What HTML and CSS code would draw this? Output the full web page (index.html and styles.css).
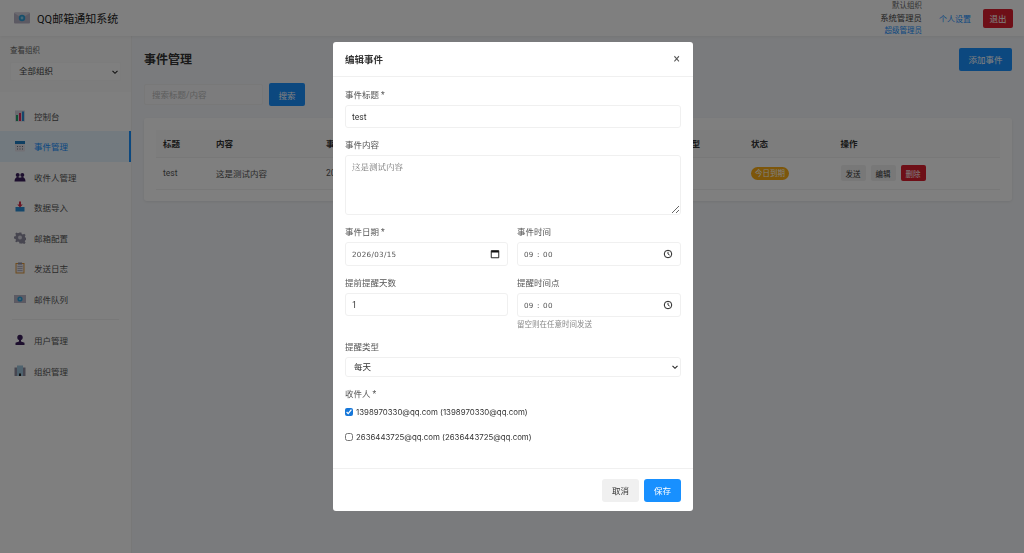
FILE: index.html
```html
<!DOCTYPE html>
<html lang="zh-CN">
<head>
<meta charset="utf-8">
<title>事件管理</title>
<link rel="stylesheet" href="styles.css">
</head>
<body>
<div class="app">
  <header class="topbar">
    <div class="brand">
      <svg class="brand-icon" viewBox="0 0 16 12"><rect x="0" y="0.5" width="16" height="11" rx="1" fill="#b9b4c6"/><path d="M0 1l8 5 8-5" fill="#d5d2de"/><circle cx="8" cy="6" r="3.2" fill="#2f9fd8"/><circle cx="8" cy="6" r="1.4" fill="#8fd0ee"/></svg>
      <span>QQ邮箱通知系统</span>
    </div>
    <div class="top-right">
      <div class="user-block">
        <div class="org-name">默认组织</div>
        <div class="user-name">系统管理员</div>
        <div class="user-role">超级管理员</div>
      </div>
      <a class="top-link">个人设置</a>
      <button class="btn btn-danger btn-logout">退出</button>
    </div>
  </header>
  <div class="layout">
    <aside class="sidebar">
      <div class="org-switch">
        <label class="org-label">查看组织</label>
        <select class="org-select"><option>全部组织</option></select>
      </div>
      <nav class="nav">
        <a class="nav-item"><svg class="ico" viewBox="0 0 12 12"><rect x="1" y="0.5" width="10" height="11" fill="#d8d4e0"/><rect x="2" y="5" width="2" height="6" fill="#22a06b"/><rect x="5" y="3" width="2" height="8" fill="#e0245e"/><rect x="8" y="1.5" width="2" height="9.500" fill="#2b8fd6"/></svg>控制台</a>
        <a class="nav-item active"><svg class="ico" viewBox="0 0 12 12"><rect x="1" y="1" width="10" height="10.500" rx="1" fill="#e4e2ea"/><rect x="1" y="1" width="10" height="3" fill="#1f7fc4"/><path d="M3 6h1v1H3zM5.500 6h1v1h-1zM8 6h1v1H8zM3 8.500h1v1H3zM5.500 8.500h1v1h-1zM8 8.500h1v1H8z" fill="#6b7280"/></svg>事件管理</a>
        <a class="nav-item"><svg class="ico" viewBox="0 0 12 12"><circle cx="3.700" cy="4" r="2" fill="#3b1f5c"/><circle cx="8.300" cy="4" r="2" fill="#3b1f5c"/><path d="M0.500 10.500c0-3 1.500-4.500 3.200-4.500s2.300 1 2.300 1 .6-1 2.300-1 3.200 1.500 3.200 4.500z" fill="#3b1f5c"/></svg>收件人管理</a>
        <a class="nav-item"><svg class="ico" viewBox="0 0 12 12"><path d="M1.500 6h9v4.500h-9z" fill="#2b8fd6"/><path d="M5 0.500h2v3h1.800L6 6.500 3.200 3.500H5z" fill="#d92d4a"/></svg>数据导入</a>
        <a class="nav-item"><svg class="ico" viewBox="0 0 12 12"><path d="M5 .5h2l.3 1.500 1.200.5 1.300-.8 1.400 1.400-.8 1.300.5 1.200 1.500.3v2l-1.500.3-.5 1.200.8 1.300-1.400 1.400-1.300-.8-1.200.5L7 11.500H5l-.3-1.500-1.200-.5-1.300.8L.8 9.400l.8-1.300-.5-1.200L-.4 6.600v-2L1.100 4.300l.5-1.200-.8-1.300L2.200.4l1.300.8 1.200-.5z" fill="#8f8da0" transform="translate(0.400 0)"/><circle cx="6" cy="5.600" r="2" fill="#d8d6e0"/></svg>邮箱配置</a>
        <a class="nav-item"><svg class="ico" viewBox="0 0 12 12"><rect x="1.500" y="1" width="9" height="10.500" fill="#e09a3e"/><rect x="2.500" y="2" width="7" height="8.500" fill="#e8e6ee"/><rect x="4" y="0.500" width="4" height="2" fill="#8f8da0"/><path d="M3.500 4.500h5M3.500 6.500h5M3.500 8.500h5" stroke="#9a98a8" stroke-width=".7"/></svg>发送日志</a>
        <a class="nav-item"><svg class="ico" viewBox="0 0 12 12"><rect x="0" y="2" width="12" height="8" fill="#b9b4c6"/><circle cx="6" cy="6" r="2.600" fill="#2f9fd8"/><circle cx="6" cy="6" r="1.100" fill="#8fd0ee"/></svg>邮件队列</a>
        <div class="nav-divider"></div>
        <a class="nav-item"><svg class="ico" viewBox="0 0 12 12"><circle cx="6" cy="3.500" r="2.700" fill="#3b1f5c"/><path d="M5 6h2v1.500l3.500 1.200V11h-9V8.700L5 7.500z" fill="#3b1f5c"/></svg>用户管理</a>
        <a class="nav-item"><svg class="ico" viewBox="0 0 12 12"><rect x="0.500" y="2.500" width="2.500" height="8.500" fill="#8f8da0"/><rect x="9" y="2.500" width="2.500" height="8.500" fill="#8f8da0"/><rect x="3" y="0.500" width="6" height="10.500" fill="#9cc4dc"/><rect x="5" y="8.500" width="2" height="2.500" fill="#222"/></svg>组织管理</a>
      </nav>
    </aside>
    <main class="main">
      <div class="page-head">
        <h1 class="page-title">事件管理</h1>
        <button class="btn btn-primary btn-add">添加事件</button>
      </div>
      <div class="search-row">
        <input class="search-input" placeholder="搜索标题/内容">
        <button class="btn btn-primary btn-search">搜索</button>
      </div>
      <section class="card">
        <table class="table">
          <colgroup><col class="c1"><col class="c2"><col class="c3"><col class="c4"><col class="c5"><col class="c6"><col class="c7"></colgroup>
          <thead><tr><th>标题</th><th>内容</th><th>事件日期</th><th>提前提醒</th><th>提醒类型</th><th>状态</th><th>操作</th></tr></thead>
          <tbody><tr>
            <td>test</td><td>这是测试内容</td><td>2026-03-15 09:00</td><td>1天</td><td>每天</td>
            <td><span class="badge">今日到期</span></td>
            <td><div class="actions"><button class="btn btn-sm">发送</button><button class="btn btn-sm">编辑</button><button class="btn btn-sm btn-danger">删除</button></div></td>
          </tr></tbody>
        </table>
      </section>
    </main>
  </div>
</div>

<div class="overlay">
  <div class="modal">
    <div class="modal-head">
      <h2 class="modal-title">编辑事件</h2>
      <span class="modal-close">×</span>
    </div>
    <div class="modal-body">
      <div class="field">
        <label class="label">事件标题 *</label>
        <input class="control" value="test">
      </div>
      <div class="field">
        <label class="label">事件内容</label>
        <textarea class="control area" placeholder="这是测试内容"></textarea>
      </div>
      <div class="grid2">
        <div class="field">
          <label class="label">事件日期 *</label>
          <div class="control picker"><span class="picker-val">2026/03/15</span>
            <svg class="picker-ico" viewBox="0 0 12 12"><path d="M1.500 2h9v8.500h-9z" fill="none" stroke="#111" stroke-width="1.100"/><path d="M1.500 2h9v2.300h-9z" fill="#111"/></svg>
          </div>
        </div>
        <div class="field">
          <label class="label">事件时间</label>
          <div class="control picker"><span class="picker-val">09<span class="colon">:</span>00</span>
            <svg class="picker-ico" viewBox="0 0 12 12"><circle cx="6" cy="6" r="4.500" fill="none" stroke="#111" stroke-width="1.100"/><path d="M6 3.300V6l2 1.300" fill="none" stroke="#111"/></svg>
          </div>
        </div>
      </div>
      <div class="grid2">
        <div class="field">
          <label class="label">提前提醒天数</label>
          <input class="control" value="1">
        </div>
        <div class="field">
          <label class="label">提醒时间点</label>
          <div class="control picker"><span class="picker-val">09<span class="colon">:</span>00</span>
            <svg class="picker-ico" viewBox="0 0 12 12"><circle cx="6" cy="6" r="4.500" fill="none" stroke="#111" stroke-width="1.100"/><path d="M6 3.300V6l2 1.300" fill="none" stroke="#111"/></svg>
          </div>
          <div class="hint">留空则在任意时间发送</div>
        </div>
      </div>
      <div class="field">
        <label class="label">提醒类型</label>
        <select class="control select"><option>每天</option></select>
      </div>
      <div class="field recipients">
        <label class="label">收件人 *</label>
        <label class="check"><input type="checkbox" checked><span>1398970330@qq.com (1398970330@qq.com)</span></label>
        <label class="check"><input type="checkbox"><span>2636443725@qq.com (2636443725@qq.com)</span></label>
      </div>
    </div>
    <div class="modal-foot">
      <button class="btn btn-cancel">取消</button>
      <button class="btn btn-save">保存</button>
    </div>
  </div>
</div>
</body>
</html>
```
FILE: styles.css
```css
* { box-sizing: border-box; }
html, body { margin: 0; height: 100%; overflow: hidden; }
body {
  font-family: "Roboto", "Noto Sans CJK SC", sans-serif;
  font-size: 8.5px;
  color: #333;
  background: #f5f7fa;
}
button, input, select, textarea { font-family: inherit; font-size: inherit; }
.app { height: 553px; display: flex; flex-direction: column; }

.topbar {
  height: 36px; flex: none; background: #fff;
  display: flex; align-items: center; justify-content: space-between;
  padding: 0 11px 0 14px;
  box-shadow: 0 1px 3px rgba(0,0,0,.06);
  position: relative;
}
.brand { display: flex; align-items: center; gap: 7px; font-size: 11px; color: #222; }
.brand-icon { width: 16px; height: 12px; }
.top-right { display: flex; align-items: center; }
.user-block { text-align: right; line-height: 12.5px; margin-right: 17px; padding-top: 1px; }
.org-name { font-size: 7.5px; color: #666; }
.user-name { font-size: 8.4px; color: #444; }
.user-role { font-size: 7.5px; color: #1890ff; }
.top-link { color: #1890ff; margin-right: 12px; font-size: 8px; }

.btn { border: 0; border-radius: 2px; padding: 0; cursor: pointer; }
.btn-danger { background: #dc1f2e; color: #fff; }
.btn-primary { background: #1890ff; color: #fff; }
.btn-logout { width: 30px; height: 19px; }

.layout { flex: 1; display: flex; min-height: 0; }
.sidebar { width: 132px; flex: none; background: #fff; border-right: 1px solid #f0f0f0; }
.org-switch { padding: 10px 10px 0; height: 56px; background: #fbfbfb; }
.org-label { display: block; font-size: 7.5px; color: #666; line-height: 10px; margin-bottom: 6px; }
.org-select {
  display: block; width: 111px; height: 19px; border: 1px solid #f8f8f8; border-radius: 2px; color: #444; padding: 0 0 1px 8px; font-size: 8.5px;
  appearance: none;
  background: #fff url("data:image/svg+xml,%3Csvg xmlns='http://www.w3.org/2000/svg' width='8' height='8' viewBox='0 0 8 8'%3E%3Cpath d='M1.500 2.800 4 5.300l2.500-2.500' fill='none' stroke='%23222' stroke-width='1.100'/%3E%3C/svg%3E") no-repeat right 1px center;
}
.nav { padding-top: 8.7px; display: flex; flex-direction: column; }
.nav-item { height: 30.5px; display: flex; align-items: center; gap: 8px; padding-left: 14px; color: #555; font-size: 8.5px; }
.nav-item.active { background: #e6f4ff; color: #1890ff; border-right: 2px solid #1890ff; }
.ico { width: 12px; height: 12px; flex: none; }
.nav-divider { height: 1px; background: #f0f0f0; margin: 5px 12px; }

.main { flex: 1; min-width: 0; padding: 11px 12px 0; }
.page-head { display: flex; justify-content: space-between; align-items: center; height: 24px; }
.page-title { margin: 0; font-size: 12px; font-weight: 700; color: #333; line-height: 26px; align-self: flex-start; }
.btn-add { width: 53px; height: 23px; }
.search-row { display: flex; align-items: center; gap: 6px; margin-top: 12px; }
.search-input { width: 119px; height: 21px; border: 1px solid #f0f0f0; border-radius: 2px; background: #f8f9fa; padding: 0 7px; }
.search-input::placeholder { color: #bbb; }
.btn-search { width: 36px; height: 23px; }

.card { margin-top: 12px; background: #fff; border-radius: 3px; padding: 12px; box-shadow: 0 1px 3px rgba(0,0,0,.08); height: 83px; }
.table { width: 100%; border-collapse: collapse; table-layout: fixed; }
.c1 { width: 53px; } .c2 { width: 110px; } .c3 { width: 220px; } .c4 { width: 120px; }
.c5 { width: 85px; } .c6 { width: 89.500px; } .c7 { width: auto; }
.table th { height: 27px; background: #fafafa; text-align: left; font-weight: 700; padding: 0 7px; border-bottom: 1px solid #f0f0f0; color: #333; }
.table td { height: 32px; padding: 0 7px; border-bottom: 1px solid #f0f0f0; color: #555; }
.badge { display: inline-block; width: 38px; height: 13px; line-height: 13px; border-radius: 7px; background: #faad14; color: #fff; text-align: center; font-size: 7.5px; }
.actions { display: flex; gap: 5px; }
.btn-sm { width: 25px; height: 16px; background: #f0f0f0; color: #333; font-size: 7.5px; }
.btn-sm.btn-danger { background: #dc1f2e; color: #fff; }

.overlay {
  position: fixed; inset: 0; background: rgba(0,0,0,.5);
  display: flex; align-items: center; justify-content: center;
  padding-left: 2px;
}
.modal { width: 360px; height: 469px; background: #fff; border-radius: 3px; display: flex; flex-direction: column; overflow: hidden; }
.modal-head { height: 35px; flex: none; display: flex; align-items: center; justify-content: space-between; padding: 0 13px 1px 12px; border-bottom: 1px solid #f0f0f0; }
.modal-title { margin: 0; font-size: 9.500px; font-weight: 700; color: #333; }
.modal-close { font-size: 12px; color: #555; line-height: 1; }
.modal-body { flex: 1; padding: 11px 12px 0; min-height: 0; }
.field { margin-bottom: 10px; }
.label { display: block; line-height: 12px; margin-bottom: 5px; padding-top: 1px; height: 12px; color: #555; font-size: 8.5px; }
.control { display: block; width: 100%; height: 23px; border: 1px solid #f0f0f0; border-radius: 3px; background: #fff; color: #333; padding: 0 6px; font-size: 8.5px; outline: none; }
.area { height: 60px; padding-top: 4px; resize: vertical; font-family: "Noto Serif CJK SC", "Noto Sans CJK SC", serif; }
.area::placeholder { color: #777; }
.grid2 { display: grid; grid-template-columns: 163px 1fr; gap: 0 9px; }
.picker { display: flex; align-items: center; justify-content: space-between; height: 24px; padding-right: 7.500px; }
.picker-val { font-family: "DejaVu Sans", sans-serif; font-size: 7.2px; color: #555; letter-spacing: .3px; }
.colon { margin: 0 3.300px; }
.picker-ico { width: 10px; height: 10px; }
.hint { font-size: 7.5px; color: #888; line-height: 10px; margin-top: 3px; }
.select {
  height: 20px; padding-left: 8px; appearance: none;
  background: #fff url("data:image/svg+xml,%3Csvg xmlns='http://www.w3.org/2000/svg' width='8' height='8' viewBox='0 0 8 8'%3E%3Cpath d='M1.500 2.800 4 5.300l2.500-2.500' fill='none' stroke='%23222' stroke-width='1.100'/%3E%3C/svg%3E") no-repeat right 1px center;
}
.recipients { margin-top: 10px; margin-bottom: 0; }
.recipients > .label { margin-bottom: 7px; }
.check { display: flex; align-items: center; gap: 3px; height: 12px; margin-bottom: 13px; color: #333; font-family: "Inter", "Noto Sans CJK SC", sans-serif; font-size: 7.85px; }
.check input { width: 8px; height: 8px; margin: 0; accent-color: #1677d9; }
.modal-foot { height: 43px; flex: none; border-top: 1px solid #f0f0f0; display: flex; justify-content: flex-end; align-items: center; gap: 5px; padding: 0 12px; }
.btn-cancel, .btn-save { width: 37px; height: 23px; border-radius: 3px; font-size: 8.5px; }
.btn-cancel { background: #f0f0f0; color: #333; }
.btn-save { background: #1890ff; color: #fff; }
```
